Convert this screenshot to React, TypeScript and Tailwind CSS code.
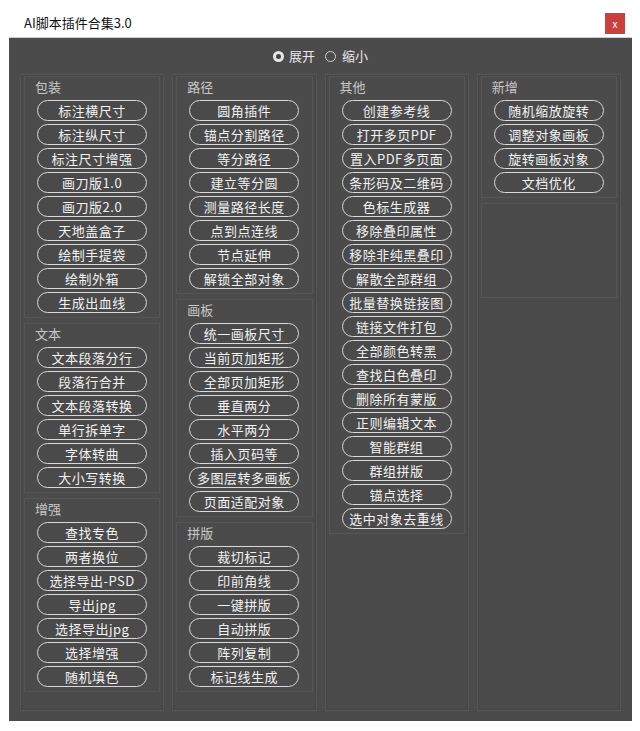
import React, { useState } from 'react';

interface Group {
  title: string;
  items: string[];
}

const columns: Group[][] = [
  [
    {
      title: '包装',
      items: ['标注横尺寸', '标注纵尺寸', '标注尺寸增强', '画刀版1.0', '画刀版2.0', '天地盖盒子', '绘制手提袋', '绘制外箱', '生成出血线'],
    },
    { title: '文本', items: ['文本段落分行', '段落行合并', '文本段落转换', '单行拆单字', '字体转曲', '大小写转换'] },
    { title: '增强', items: ['查找专色', '两者换位', '选择导出-PSD', '导出jpg', '选择导出jpg', '选择增强', '随机填色'] },
  ],
  [
    {
      title: '路径',
      items: ['圆角插件', '锚点分割路径', '等分路径', '建立等分圆', '测量路径长度', '点到点连线', '节点延伸', '解锁全部对象'],
    },
    {
      title: '画板',
      items: ['统一画板尺寸', '当前页加矩形', '全部页加矩形', '垂直两分', '水平两分', '插入页码等', '多图层转多画板', '页面适配对象'],
    },
    { title: '拼版', items: ['裁切标记', '印前角线', '一键拼版', '自动拼版', '阵列复制', '标记线生成'] },
  ],
  [
    {
      title: '其他',
      items: [
        '创建参考线', '打开多页PDF', '置入PDF多页面', '条形码及二维码', '色标生成器', '移除叠印属性',
        '移除非纯黑叠印', '解散全部群组', '批量替换链接图', '链接文件打包', '全部颜色转黑', '查找白色叠印',
        '删除所有蒙版', '正则编辑文本', '智能群组', '群组拼版', '锚点选择', '选中对象去重线',
      ],
    },
  ],
  [{ title: '新增', items: ['随机缩放旋转', '调整对象画板', '旋转画板对象', '文档优化'] }],
];

const Pill = ({ label }: { label: string }) => (
  <button className="w-[110px] h-[21px] rounded-full border-[1.5px] border-[#d9d9d9] bg-[#4a4a4a] text-[13px] leading-[18px] text-[#f2f2f2] tracking-[0.5px]">
    {label}
  </button>
);

const Panel = ({ group }: { group: Group }) => (
  <div className="border border-[#565656] pt-[2px] pb-[4px]">
    <div className="pl-[10px] h-[16px] leading-[16px] text-[13px] text-[#c8c8c8] mb-[5px]">{group.title}</div>
    <div className="flex flex-col items-center gap-[3px]">
      {group.items.map((it) => (
        <Pill key={it} label={it} />
      ))}
    </div>
  </div>
);

export default function App() {
  const [mode, setMode] = useState<'open' | 'small'>('open');

  return (
    <div
      className="w-[640px] h-[731px] bg-white pt-[9px] pl-[9px]"
      style={{ fontFamily: '"Noto Sans CJK SC", "Noto Sans", sans-serif' }}
    >
      <div className="w-[623px] h-[712px] flex flex-col">
        {/* title bar */}
        <div className="h-[29px] bg-white flex items-center justify-between pl-[15px] pr-[7px] border-b border-[#cfcfcf]">
          <span className="text-[13px] text-[#111]">AI脚本插件合集3.0</span>
          <button className="w-[20px] h-[21px] bg-[#c9403f] text-white text-[10px] leading-[21px] text-center">x</button>
        </div>

        {/* body */}
        <div className="flex-1 bg-[#4b4b4b] flex flex-col px-[11px] pb-[10px]">
          <div className="h-[36px] flex items-center justify-center gap-[10px] text-[13px] text-[#e8e8e8]">
            <button onClick={() => setMode('open')} className="flex items-center gap-[5px]">
              <span className="w-[11px] h-[11px] rounded-full bg-[#e6e6e6] flex items-center justify-center">
                {mode === 'open' && <span className="w-[5px] h-[5px] rounded-full bg-[#444]" />}
              </span>
              展开
            </button>
            <button onClick={() => setMode('small')} className="flex items-center gap-[6px]">
              <span className="w-[11px] h-[11px] rounded-full border border-[#cfcfcf] flex items-center justify-center">
                {mode === 'small' && <span className="w-[5px] h-[5px] rounded-full bg-[#ddd]" />}
              </span>
              缩小
            </button>
          </div>

          <div className="flex-1 flex gap-[8px]">
            {columns.map((col, i) => (
              <div
                key={i}
                className="w-[145px] border border-[#555] px-[3px] pt-[1px] pb-[3px] flex flex-col gap-[5px] shadow-[inset_0_0_2px_rgba(0,0,0,0.25)]"
              >
                {col.map((g) => (
                  <Panel key={g.title} group={g} />
                ))}
                {i === 3 && <div className="h-[95px] border border-[#565656]" />}
              </div>
            ))}
          </div>
        </div>
      </div>
    </div>
  );
}
